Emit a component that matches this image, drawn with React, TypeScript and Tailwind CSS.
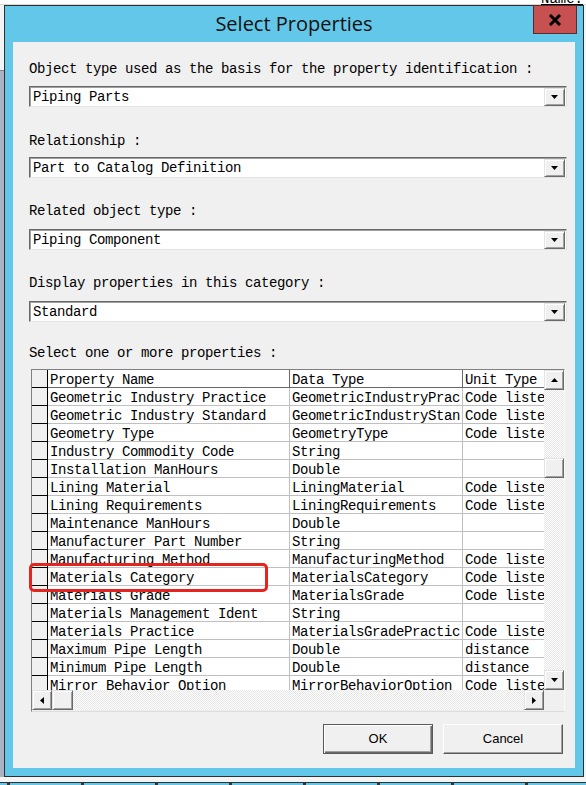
import React from 'react';

const mono = { fontFamily: '"Liberation Mono", "Noto Sans Mono CJK SC", monospace' };

const rows: [string, string, string][] = [
    ['Geometric Industry Practice', 'GeometricIndustryPrac', 'Code liste'],
    ['Geometric Industry Standard', 'GeometricIndustryStan', 'Code liste'],
    ['Geometry Type', 'GeometryType', 'Code liste'],
    ['Industry Commodity Code', 'String', ''],
    ['Installation ManHours', 'Double', ''],
    ['Lining Material', 'LiningMaterial', 'Code liste'],
    ['Lining Requirements', 'LiningRequirements', 'Code liste'],
    ['Maintenance ManHours', 'Double', ''],
    ['Manufacturer Part Number', 'String', ''],
    ['Manufacturing Method', 'ManufacturingMethod', 'Code liste'],
    ['Materials Category', 'MaterialsCategory', 'Code liste'],
    ['Materials Grade', 'MaterialsGrade', 'Code liste'],
    ['Materials Management Ident', 'String', ''],
    ['Materials Practice', 'MaterialsGradePractic', 'Code liste'],
    ['Maximum Pipe Length', 'Double', 'distance'],
    ['Minimum Pipe Length', 'Double', 'distance'],
    ['Mirror Behavior Option', 'MirrorBehaviorOption', 'Code liste'],
];

const raised =
    'bg-[#f0f0f0] border border-t-[#e3e3e3] border-l-[#e3e3e3] border-r-[#696969] border-b-[#696969] shadow-[inset_1px_1px_0_#ffffff,inset_-1px_-1px_0_#a0a0a0]';

const dither = 'bg-[repeating-conic-gradient(#e6e6e6_0_25%,#ffffff_0_50%)] bg-[length:2px_2px]';

type Dir = 'up' | 'down' | 'left' | 'right';

const Arrow: React.FC<{ dir: Dir }> = ({ dir }) => {
    const pts = {
        up: '0,4 7,4 3.5,0',
        down: '0,0 7,0 3.5,4',
        left: '4,0 4,7 0,3.5',
        right: '0,0 0,7 4,3.5',
    }[dir];
    const vertical = dir === 'up' || dir === 'down';
    return (
        <svg width={vertical ? 7 : 4} height={vertical ? 4 : 7} viewBox={vertical ? '0 0 7 4' : '0 0 4 7'}>
            <polygon points={pts} fill="#000" />
        </svg>
    );
};

const ScrollButton: React.FC<{ dir: Dir; className?: string }> = ({ dir, className = '' }) => (
    <div className={`${raised} flex items-center justify-center ${className}`}>
        <Arrow dir={dir} />
    </div>
);

const Label: React.FC<{ children: React.ReactNode }> = ({ children }) => (
    <div className="h-[18px] pt-[2px] leading-[18px] text-[14px] tracking-[-0.4px] text-black whitespace-pre" style={mono}>
        {children}
    </div>
);

const Combo: React.FC<{ value: string }> = ({ value }) => (
    <div className="h-[21px] w-full flex items-center bg-white border border-t-[#696969] border-l-[#696969] border-r-[#e3e3e3] border-b-[#e3e3e3] shadow-[inset_1px_1px_0_#a0a0a0]">
        <div className="flex-1 pl-[3px] pt-[2px] text-[14px] tracking-[-0.4px] text-black whitespace-pre" style={mono}>
            {value}
        </div>
        <ScrollButton dir="down" className="w-[21px] h-[18px] mr-[1px]" />
    </div>
);

const cell = 'shrink-0 border-r border-b pl-[2px] leading-[20px] whitespace-pre overflow-hidden';

const PropertyGrid: React.FC = () => (
    <div className="relative w-[534px] h-[343px] border border-t-[#808080] border-l-[#808080] border-r-[#f8f8f8] border-b-[#dcdcdc] flex flex-col">
        <div className="flex h-[320px]">
            {/* grid body, last row is cut by the horizontal bar */}
            <div className="w-[512px] h-[320px] overflow-hidden bg-white text-[14px] tracking-[-0.4px] text-black" style={mono}>
                <div className="flex h-[18px]">
                    <div className="w-[16px] shrink-0 bg-[#f0f0f0] border-r border-b border-black" />
                    <div className={`w-[242px] border-[#696969] ${cell}`}>Property Name</div>
                    <div className={`w-[173px] border-[#696969] ${cell}`}>Data Type</div>
                    <div className={`w-[100px] border-[#696969] ${cell}`}>Unit Type</div>
                </div>
                {rows.map(([name, type, unit]) => (
                    <div key={name} className="flex h-[18px]">
                        <div className="w-[16px] shrink-0 bg-[#f0f0f0] border-r border-b border-black" />
                        <div className={`w-[242px] border-[#c0c0c0] ${cell}`}>{name}</div>
                        <div className={`w-[173px] border-[#c0c0c0] ${cell}`}>{type}</div>
                        <div className={`w-[100px] border-[#c0c0c0] ${cell}`}>{unit}</div>
                    </div>
                ))}
            </div>
            <div className={`w-[20px] h-[320px] flex flex-col ${dither}`}>
                <ScrollButton dir="up" className="h-[20px] w-[20px]" />
                <div className="flex-1">
                    <div className={`${raised} mt-[68px] h-[20px] w-[20px]`} />
                </div>
                <ScrollButton dir="down" className="h-[20px] w-[20px]" />
            </div>
        </div>
        <div className="flex h-[20px]">
            <ScrollButton dir="left" className="w-[20px] h-[20px]" />
            <div className={`${raised} w-[21px] h-[20px]`} />
            <div className={`flex-1 ${dither}`} />
            <ScrollButton dir="right" className="w-[20px] h-[20px]" />
            <div className="w-[20px] bg-[#f0f0f0]" />
        </div>
        {/* red callout around the selected row */}
        <div className="absolute left-[-3px] top-[193px] w-[239px] h-[29px] border-[3px] border-[#e5231f] rounded-[5px]" />
    </div>
);

export default function App() {
    return (
        <div className="relative w-[586px] h-[785px] overflow-hidden bg-[#f4f4f4]">
            {/* windows behind the dialog */}
            <div className="absolute left-0 top-0 w-[586px] h-[5px] bg-white border-b border-[#d8d8d8]" />
            <div className="absolute left-[541px] top-[-11px] text-[14px] text-black underline" style={mono}>
                Name:
            </div>
            <div className="absolute left-0 top-[70px] w-[4px] h-[707px] bg-[#abb3c3] border-t border-[#808080]" />
            <div className="absolute left-0 top-[782px] w-[586px] h-[3px] flex gap-[3px] bg-[#333] pt-[1px]">
                <div className="w-[7px] bg-[#63c7e9]" />
                <div className="w-[71px] bg-[#63c7e9]" />
                <div className="w-[71px] bg-[#63c7e9]" />
                <div className="w-[71px] bg-[#63c7e9]" />
                <div className="w-[71px] bg-[#63c7e9]" />
                <div className="w-[71px] bg-[#63c7e9]" />
                <div className="w-[71px] bg-[#63c7e9]" />
                <div className="w-[71px] bg-[#63c7e9]" />
                <div className="flex-1 bg-[#63c7e9]" />
            </div>

            <div className="relative ml-[4px] pt-[5px]">
                <div className="relative w-[580px] h-[772px] border border-[#2e2e2e] bg-[#63c7e9] flex flex-col">
                    <div className="h-[36px] flex items-center justify-center pb-[1px]">
                        <span className="text-[20px] text-[#111] leading-none" style={{ fontFamily: '"Open Sans", "Noto Sans", sans-serif' }}>
                            Select Properties
                        </span>
                    </div>
                    <div className="absolute right-[6px] top-[-1px] w-[44px] h-[29px] bg-[#c75050] border border-[#5b2a2a] flex items-center justify-center">
                        <svg width="14" height="12" viewBox="0 0 14 12">
                            <path d="M2 1 L12 11 M12 1 L2 11" stroke="#000" strokeWidth="3" />
                        </svg>
                    </div>

                    <div className="mx-[8px] w-[562px] h-[726px] bg-[#f0f0f0] pl-[16px] pr-[8px] pt-[16px] flex flex-col">
                        <Label>Object type used as the basis for the property identification :</Label>
                        <div className="mt-[10px]"><Combo value="Piping Parts" /></div>
                        <div className="mt-[23px]"><Label>Relationship :</Label></div>
                        <div className="mt-[9px]"><Combo value="Part to Catalog Definition" /></div>
                        <div className="mt-[22px]"><Label>Related object type :</Label></div>
                        <div className="mt-[11px]"><Combo value="Piping Component" /></div>
                        <div className="mt-[22px]"><Label>Display properties in this category :</Label></div>
                        <div className="mt-[11px]"><Combo value="Standard" /></div>
                        <div className="mt-[20px]"><Label>Select one or more properties :</Label></div>
                        <div className="mt-[9px] ml-[2px]"><PropertyGrid /></div>

                        <div className="mt-[12px] flex justify-end gap-[10px] pr-[4px] text-[13px] text-black" style={{ fontFamily: '"Liberation Sans", Arial, sans-serif' }}>
                            <button className="w-[110px] h-[30px] bg-[#f0f0f0] border border-[#5a5a5a] shadow-[inset_1px_1px_0_#ffffff,inset_-1px_-1px_0_#696969,inset_-2px_-2px_0_#a0a0a0]">
                                OK
                            </button>
                            <button className="w-[120px] h-[30px] bg-[#f0f0f0] border border-t-[#ffffff] border-l-[#ffffff] border-r-[#5a5a5a] border-b-[#5a5a5a] shadow-[inset_-1px_-1px_0_#a0a0a0]">
                                Cancel
                            </button>
                        </div>
                    </div>
                </div>
            </div>
        </div>
    );
}
